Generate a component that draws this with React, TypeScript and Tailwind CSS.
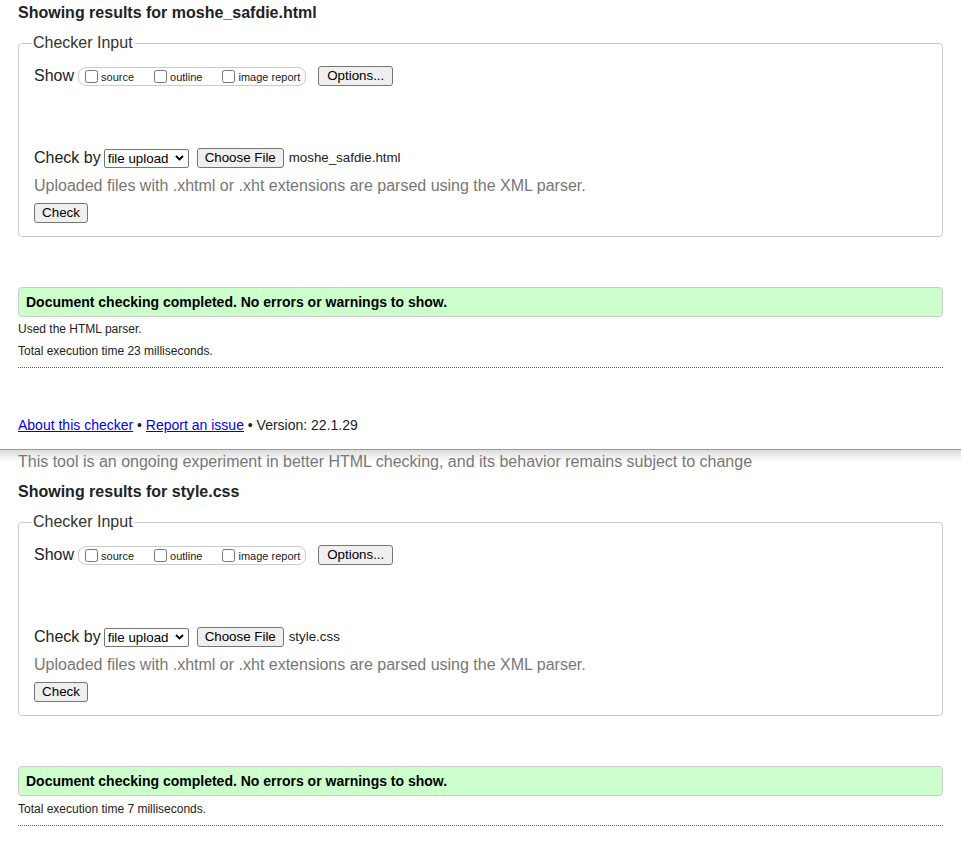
import React from "react";

function Chevron() {
  return (
    <svg width="9" height="6" viewBox="0 0 9 6" className="absolute right-[5px] top-[6px]">
      <polyline points="1,1 4.5,4.5 8,1" fill="none" stroke="#000" strokeWidth="1.8" />
    </svg>
  );
}

function Btn({ children, className = "" }: { children: React.ReactNode; className?: string }) {
  return (
    <button
      type="button"
      className={
        "h-[20px] whitespace-nowrap bg-[#efefef] border border-[#767676] rounded-[3px] text-[13.33px] leading-[18px] text-black " +
        className
      }
    >
      {children}
    </button>
  );
}

function Check({ label, gapAfter }: { label: string; gapAfter: boolean }) {
  return (
    <label className={"flex items-center " + (gapAfter ? "mr-[20px]" : "")}>
      <input type="checkbox" className="m-0 w-[13px] h-[13px]" />
      <span className="ml-[3px] mt-[2px] text-[11px] leading-[13px] text-[#222]">{label}</span>
    </label>
  );
}

function Section({ file, extra }: { file: string; extra: boolean }) {
  return (
    <div className="px-[18px]">
      <h2 className="text-[16px] leading-[20px] font-bold text-[#222] pt-[3px]">Showing results for {file}</h2>
      <fieldset className="mt-[10px] border border-[#cccccc] rounded-[4px] pl-[15px] pr-[15px] pb-[13px]">
        <legend className="text-[16px] leading-[20px] text-[#333] px-[1px] -ml-[2px]">Checker Input</legend>
        <div className="mt-[13px] flex items-center h-[20px]">
          <span className="text-[16px] leading-[18px] text-[#222]">Show</span>
          <div className="ml-[4px] h-[19px] border border-[#cccccc] rounded-[8px] flex items-center pl-[6px] pr-[5px]">
            <Check label="source" gapAfter />
            <Check label="outline" gapAfter />
            <Check label="image report" gapAfter={false} />
          </div>
          <Btn className="ml-[12px] w-[75px]">Options...</Btn>
        </div>
        <div className="mt-[62px] flex items-center h-[20px]">
          <span className="text-[16px] leading-[18px] text-[#222]">Check by</span>
          <div className="relative ml-[3px]">
            <select className="appearance-none block w-[85px] h-[19px] bg-white border border-[#767676] rounded-[2px] pl-[3px] text-[13.33px] leading-[17px] text-black">
              <option>file upload</option>
            </select>
            <Chevron />
          </div>
          <Btn className="ml-[8px] w-[87px]">Choose File</Btn>
          <span className="ml-[5px] text-[13.33px] leading-[16px] text-[#222]">{file}</span>
        </div>
        <p className="mt-[9px] text-[16px] leading-[18px] text-[#777]">
          Uploaded files with .xhtml or .xht extensions are parsed using the XML parser.
        </p>
        <Btn className="mt-[8px] w-[54px] block">Check</Btn>
      </fieldset>
      <div className="mt-[50px] h-[30px] border border-[#cccccc] rounded-[4px] bg-[#ccffcc] flex items-center pl-[7px]">
        <span className="text-[14px] font-bold text-black">
          Document checking completed. No errors or warnings to show.
        </span>
      </div>
      <div className={"text-[12px] leading-[22px] text-[#222] " + (extra ? "mt-[1px]" : "mt-[2px]")}>
        {extra && <p>Used the HTML parser.</p>}
        <p>Total execution time {extra ? "23" : "7"} milliseconds.</p>
      </div>
      <div className="mt-[5px] border-t border-dotted border-[#666]" />
    </div>
  );
}

export default function App() {
  return (
    <div className="min-h-[861px] bg-white font-['Liberation_Sans',Arial,sans-serif]">
      <Section file="moshe_safdie.html" extra />
      <div className="px-[18px] mt-[49px] pb-[16px] text-[14px] leading-[16px] text-[#222]">
        <a href="#" className="text-[#0000ee] underline">About this checker</a>
        {" • "}
        <a href="#" className="text-[#0000ee] underline">Report an issue</a>
        {" • Version: 22.1.29"}
      </div>
      <div className="border-t border-[#9a9a9a] bg-[linear-gradient(to_bottom,#dcdcdc,#ffffff_12px)]">
        <p className="px-[18px] pt-[3px] text-[16px] leading-[18px] text-[#777]">
          This tool is an ongoing experiment in better HTML checking, and its behavior remains subject to change
        </p>
        <div className="mt-[8px]">
          <Section file="style.css" extra={false} />
        </div>
      </div>
    </div>
  );
}
